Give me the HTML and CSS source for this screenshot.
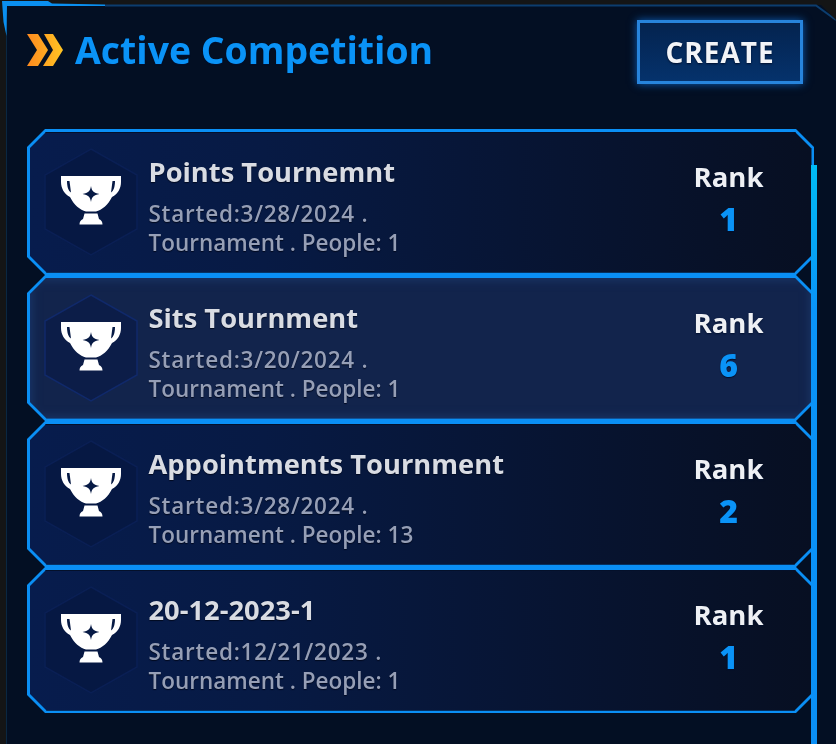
FILE: index.html
```html
<!DOCTYPE html>
<html lang="en">
<head>
<meta charset="utf-8">
<title>Active Competition</title>
<link rel="stylesheet" href="styles.css">
</head>
<body>
<svg width="0" height="0" class="defs">
  <defs>
    <linearGradient id="chev" x1="0" y1="0" x2="1" y2="0">
      <stop offset="0" stop-color="#ff8a1f"/>
      <stop offset="1" stop-color="#ffc423"/>
    </linearGradient>
    <symbol id="trophy" viewBox="0 0 60 52">
      <path fill="#fff" d="M0 0H60V6C60 12 57 18 51 21C47 29 41 34 35 35.500H25C19 34 13 29 9 21C3 18 0 12 0 6Z"/>
      <path fill="#071a45" d="M6 5H8.500L10 16.500C7.500 15 6 11 6 5ZM54 5H51.500L50 16.500C52.500 15 54 11 54 5Z"/>
      <path fill="#071a45" d="M30 10C30.800 15 32.500 17 38.500 18C32.500 19 30.800 21 30 26C29.200 21 27.500 19 21.500 18C27.500 17 29.200 15 30 10Z"/>
      <path fill="#fff" d="M23.500 37.500H36.500L38 43C40.500 44 41.500 46 41.500 48.500H18.500C18.500 46 19.500 44 22 43Z"/>
    </symbol>
  </defs>
</svg>
<main class="panel">
  <svg class="panel-frame" viewBox="0 0 836 744" width="836" height="744" aria-hidden="true">
    <path class="frame-thin" d="M105 5.500H816L836 20"/>
    <path class="frame-left" d="M6.500 20V744"/>
    <polygon class="frame-bright" points="2,1 48,1 52,3.500 105,4.500 105,6 7,6 6.500,36 3.500,22"/>
  </svg>
  <header class="head">
    <div class="head-title">
      <svg class="chevrons" viewBox="0 0 36 32" width="36" height="32" aria-hidden="true">
        <path fill="url(#chev)" d="M0 0H11L21 16L11 32H0L10 16ZM17 0H26L36 16L26 32H16L26 16Z"/>
      </svg>
      <h1>Active Competition</h1>
    </div>
    <button class="create">CREATE</button>
  </header>
  <section class="list">
    <article class="card">
      <div class="card-inner">
        <div class="badge"><svg class="hex" viewBox="0 0 94 108"><polygon points="47,1 93,27 93,81 47,107 1,81 1,27"/></svg><svg class="trophy"><use href="#trophy"/></svg></div>
        <div class="info">
          <h2>Points Tournemnt</h2>
          <p>Started:3/28/2024 .<br>Tournament . People: 1</p>
        </div>
        <div class="rank"><span class="rank-label">Rank</span><span class="rank-num">1</span></div>
      </div>
    </article>
    <article class="card card-active">
      <div class="card-inner">
        <div class="badge"><svg class="hex" viewBox="0 0 94 108"><polygon points="47,1 93,27 93,81 47,107 1,81 1,27"/></svg><svg class="trophy"><use href="#trophy"/></svg></div>
        <div class="info">
          <h2>Sits Tournment</h2>
          <p>Started:3/20/2024 .<br>Tournament . People: 1</p>
        </div>
        <div class="rank"><span class="rank-label">Rank</span><span class="rank-num">6</span></div>
      </div>
    </article>
    <article class="card">
      <div class="card-inner">
        <div class="badge"><svg class="hex" viewBox="0 0 94 108"><polygon points="47,1 93,27 93,81 47,107 1,81 1,27"/></svg><svg class="trophy"><use href="#trophy"/></svg></div>
        <div class="info">
          <h2>Appointments Tournment</h2>
          <p>Started:3/28/2024 .<br>Tournament . People: 13</p>
        </div>
        <div class="rank"><span class="rank-label">Rank</span><span class="rank-num">2</span></div>
      </div>
    </article>
    <article class="card">
      <div class="card-inner">
        <div class="badge"><svg class="hex" viewBox="0 0 94 108"><polygon points="47,1 93,27 93,81 47,107 1,81 1,27"/></svg><svg class="trophy"><use href="#trophy"/></svg></div>
        <div class="info">
          <h2>20-12-2023-1</h2>
          <p>Started:12/21/2023 .<br>Tournament . People: 1</p>
        </div>
        <div class="rank"><span class="rank-label">Rank</span><span class="rank-num">1</span></div>
      </div>
    </article>
  </section>
  <div class="scrollbar"></div>
</main>
</body>
</html>
```
FILE: styles.css
```css
html, body {
  margin: 0;
  height: 744px;
  overflow: hidden;
  background: #141516;
}
.defs {
  position: absolute;
}
.panel {
  position: relative;
  box-sizing: border-box;
  height: 739px;
  margin: 5px 0 0 6px;
  padding: 15px 0 0 21px;
  background: #030f23;
  font-family: "Open Sans", "Noto Sans", sans-serif;
  filter: blur(0.45px);
  clip-path: polygon(-6px -5px, 810px -5px, 830px 15px, 830px 739px, -6px 739px);
}
.panel-frame {
  position: absolute;
  left: -6px;
  top: -5px;
  pointer-events: none;
}
.frame-thin {
  fill: none;
  stroke: #0c3d6e;
  stroke-width: 2;
}
.frame-left {
  fill: none;
  stroke: #0a2742;
  stroke-width: 1;
}
.frame-bright {
  fill: #0a8ff0;
}
.head {
  display: flex;
  justify-content: space-between;
  align-items: center;
  width: 776px;
  height: 64px;
}
.head-title {
  display: flex;
  align-items: center;
  gap: 12px;
  margin-top: -4px;
}
.chevrons {
  display: block;
  margin-top: -1px;
}
h1 {
  margin: 0;
  color: #0a93f7;
  font-size: 37.4px;
  font-weight: 700;
  line-height: 40px;
  text-shadow: 0 1px 1px #001030;
}
.create {
  box-sizing: border-box;
  width: 166px;
  height: 64px;
  padding: 0;
  border: 3px solid #2784dc;
  background: linear-gradient(180deg, #04234f, #05326c);
  box-shadow: 0 0 8px #0b5cb5;
  color: #f2f4f8;
  font-family: inherit;
  font-size: 28px;
  font-weight: 700;
  letter-spacing: 1px;
  text-shadow: 0 1px 2px #00102e;
}
.list {
  display: flex;
  flex-direction: column;
  width: 787px;
  margin-top: 45px;
}
.card {
  height: 146px;
  padding: 2.5px;
  box-sizing: border-box;
  background: #0a8ff5;
  clip-path: polygon(18px 0, calc(100% - 18px) 0, 100% 18px, 100% calc(100% - 18px), calc(100% - 18px) 100%, 18px 100%, 0 calc(100% - 18px), 0 18px);
}
.card-inner {
  display: flex;
  align-items: flex-start;
  box-sizing: border-box;
  height: 100%;
  background: linear-gradient(90deg, #071c4d 0%, #071a44 30%, #070f22 100%);
  box-shadow: inset 0 1px 0 #04102a, inset 0 -1px 0 #04102a;
  clip-path: polygon(17px 0, calc(100% - 17px) 0, 100% 17px, 100% calc(100% - 17px), calc(100% - 17px) 100%, 17px 100%, 0 calc(100% - 17px), 0 17px);
}
.card-active .card-inner {
  background: #12244c;
  box-shadow: inset 0 0 12px #1c3c74;
}
.badge {
  position: relative;
  flex: none;
  display: flex;
  align-items: center;
  justify-content: center;
  width: 94px;
  height: 108px;
  margin: 16px 0 0 14px;
}
.hex {
  position: absolute;
  inset: 0;
  fill: #061843;
  stroke: #0a1f54;
  stroke-width: 1.500;
}
.card-active .hex {
  fill: #0c1d48;
  stroke: #10296a;
}
.trophy {
  position: relative;
  width: 60px;
  height: 52px;
}
.info {
  flex: 1;
  margin: 23px 0 0 11px;
  min-width: 0;
}
h2 {
  margin: 0;
  color: #d9dce3;
  font-size: 27.3px;
  font-weight: 700;
  line-height: 34px;
  text-shadow: 0 1px 1px #020a20;
}
.info p {
  margin: 10px 0 0;
  color: #969fb6;
  font-size: 22.5px;
  font-weight: 600;
  line-height: 29px;
  text-shadow: 0 1px 1px #020a20;
}
.info p::first-line {
  letter-spacing: 0.75px;
}
.rank {
  flex: none;
  display: flex;
  flex-direction: column;
  align-items: center;
  width: 100px;
  margin: 28px 33px 0 0;
}
.rank-label {
  color: #eef0f4;
  font-size: 27.5px;
  font-weight: 700;
  line-height: 34px;
  text-shadow: 0 1px 2px #00102e;
}
.rank-num {
  margin-top: 5px;
  color: #0a93f7;
  font-size: 32px;
  font-weight: 800;
  line-height: 40px;
  text-shadow: 0 1px 1px #00102e;
}
.scrollbar {
  position: absolute;
  left: 805px;
  top: 160px;
  bottom: 0;
  width: 6px;
  background: linear-gradient(180deg, #00bcf5 0%, #0a93f7 25%, #0a8ff5 100%);
}
```
